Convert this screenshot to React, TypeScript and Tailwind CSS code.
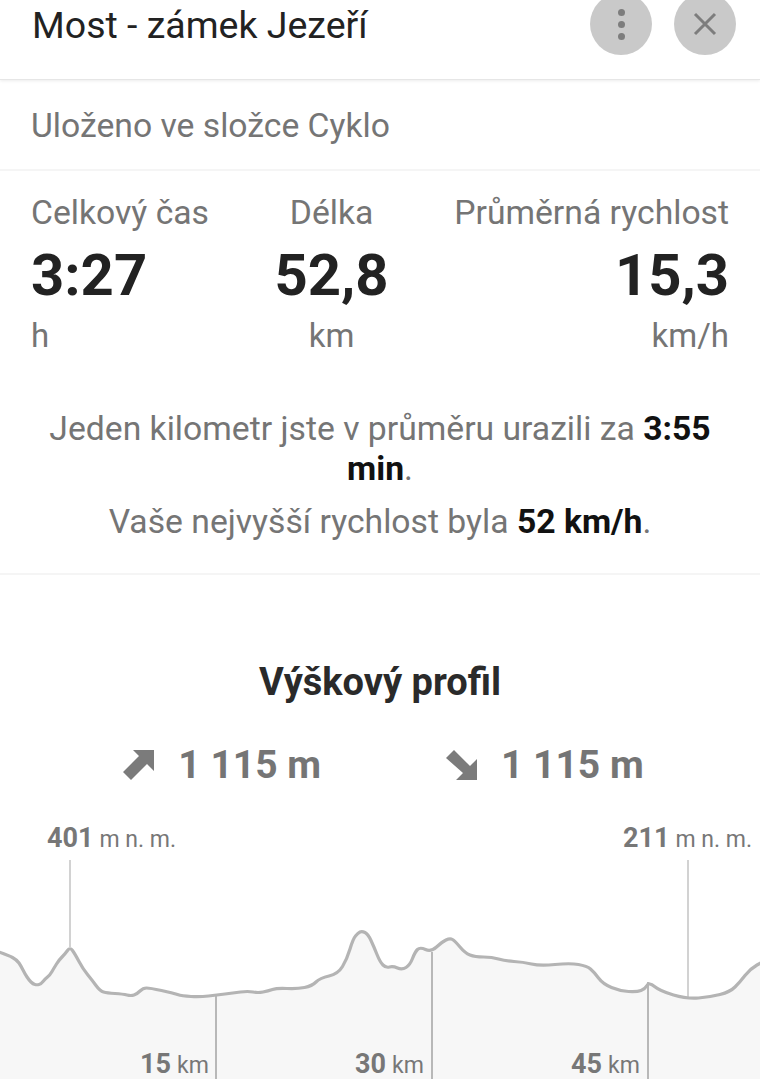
const points: [number, number][] = [
  [-4, 952], [8, 956], [17, 961], [21, 967], [25, 975], [29, 981], [33, 985], [37, 986], [41, 985], [45, 980], [50, 976], [54, 969], [59, 961], [65, 955], [70, 948],
  [75, 955], [83, 970], [92, 981], [100, 992], [107, 994], [123, 995], [131, 997], [137, 995], [143, 989], [150, 989], [173, 994], [182, 997], [200, 998], [217, 996],
  [233, 994], [248, 992], [258, 994], [268, 992], [277, 989], [297, 990], [312, 987], [320, 979], [338, 975], [347, 960], [353, 940], [358, 934], [362, 932], [368, 935],
  [374, 948], [380, 963], [386, 969], [393, 967], [402, 971], [410, 966], [415, 953], [420, 948], [431, 953], [442, 943], [450, 939], [455, 942], [465, 954], [475, 958],
  [492, 958], [505, 962], [523, 963], [540, 967], [570, 964], [587, 967], [594, 973], [603, 985], [620, 992], [637, 993], [645, 990], [649, 983], [660, 992], [687, 1000],
  [710, 998], [730, 993], [740, 983], [750, 970], [764, 962],
];

// quadratic through midpoints, keeps the line soft
function smooth(pts: [number, number][]) {
  let d = `M${pts[0][0]} ${pts[0][1]}`;
  for (let i = 1; i < pts.length - 1; i++) {
    const mx = (pts[i][0] + pts[i + 1][0]) / 2;
    const my = (pts[i][1] + pts[i + 1][1]) / 2;
    d += ` Q${pts[i][0]} ${pts[i][1]} ${mx} ${my}`;
  }
  const last = pts[pts.length - 1];
  return `${d} L${last[0]} ${last[1]}`;
}

const line = smooth(points);

function UpArrow() {
  return (
    <svg width="34" height="32" viewBox="0 0 34 32" className="text-[#7b7b7b]">
      <path d="M11 1 H32 V22 L25 15 L9 31 L1 23 L17 7 Z" fill="currentColor" />
    </svg>
  );
}

function DownArrow() {
  return (
    <svg width="34" height="32" viewBox="0 0 34 32" className="text-[#7b7b7b]">
      <path d="M9 1 L25 17 L32 10 V31 H11 L18 24 L1 9 Z" fill="currentColor" />
    </svg>
  );
}

const stats = [
  { label: "Celkový čas", value: "3:27", unit: "h", align: "text-left" },
  { label: "Délka", value: "52,8", unit: "km", align: "text-center" },
  { label: "Průměrná rychlost", value: "15,3", unit: "km/h", align: "text-right" },
];

export default function App() {
  return (
    <div className="h-[1080px] w-[760px] overflow-hidden bg-white font-['Roboto',sans-serif]">
      <header className="flex h-[80px] items-start justify-between border-b border-[#e6e6e6] pl-[32px] pr-[24px] shadow-[0_1px_3px_rgba(0,0,0,0.08)]">
        <div className="-mt-[6px] flex h-[62px] items-center text-[37.5px] text-[#222]">
          Most - zámek Jezeří
        </div>
        <div className="-mt-[7px] flex gap-[22px]">
          <div className="flex h-[62px] w-[62px] flex-col items-center justify-center gap-[5px] rounded-full bg-[#c9c9c9]">
            <span className="h-[7px] w-[7px] rounded-full bg-[#7d7d7d]" />
            <span className="h-[7px] w-[7px] rounded-full bg-[#7d7d7d]" />
            <span className="h-[7px] w-[7px] rounded-full bg-[#7d7d7d]" />
          </div>
          <div className="flex h-[62px] w-[62px] items-center justify-center rounded-full bg-[#c9c9c9]">
            <svg width="26" height="26" viewBox="0 0 26 26" className="text-[#7d7d7d]">
              <path d="M3 3 L23 23 M23 3 L3 23" stroke="currentColor" strokeWidth="3" fill="none" />
            </svg>
          </div>
        </div>
      </header>

      <div className="flex h-[91px] items-center border-b-2 border-[#f5f5f5] px-[31px] pt-[4px] text-[33.7px] text-[#757575]">
        Uloženo ve složce Cyklo
      </div>

      <section className="flex justify-between px-[31px] pt-[21px]">
        {stats.map((s) => (
          <div key={s.label} className={s.align}>
            <div className="h-[42px] text-[33.7px] leading-[42px] text-[#757575]">{s.label}</div>
            <div className="mt-[1px] h-[80px] text-[58px] leading-[80px] font-bold text-[#222]">{s.value}</div>
            <div className="h-[42px] text-[33px] leading-[42px] text-[#757575]">{s.unit}</div>
          </div>
        ))}
      </section>

      <section className="border-b-2 border-[#f5f5f5] px-[31px] pt-[52px] pb-[31px] text-center text-[33.7px] text-[#757575]">
        <p className="leading-[40px]">
          Jeden kilometr jste v průměru urazili za <b className="text-[#111]">3:55</b> <b className="text-[#111]">min</b>.
        </p>
        <p className="mt-[13px] leading-[40px]">
          Vaše nejvyšší rychlost byla <b className="text-[#111]">52 km/h</b>.
        </p>
      </section>

      <h2 className="mt-[83px] text-center text-[38px] leading-[48px] font-bold text-[#2a2a2a]">Výškový profil</h2>

      <div className="mt-[35px] flex h-[48px] items-center justify-center gap-[124px] pl-[6px] text-[39px] font-bold text-[#757575]">
        <div className="flex items-center gap-[22px]">
          <UpArrow />
          <span>1 115 m</span>
        </div>
        <div className="flex items-center gap-[22px]">
          <DownArrow />
          <span>1 115 m</span>
        </div>
      </div>

      <div className="relative mt-[30px] h-[260px]">
        <svg width="760" height="260" viewBox="0 820 760 260" className="absolute inset-0">
          <path d={`${line} L764 1084 L-4 1084 Z`} fill="#f7f7f7" />
          <path d="M70 861 V948 M688 861 V1000" stroke="#d2d2d2" strokeWidth="2" fill="none" />
          <path d="M216 996 V1080 M432 953 V1080 M648 983 V1080" stroke="#b8b8b8" strokeWidth="2" fill="none" />
          <path d={line} stroke="#b4b4b4" strokeWidth="3.2" fill="none" strokeLinejoin="round" />
        </svg>
        <Label className="left-[47px] top-[3px]" value="401" unit="m n. m." />
        <Label className="left-[623px] top-[3px]" value="211" unit="m n. m." />
        <Label className="left-[140px] top-[229px]" value="15" unit="km" />
        <Label className="left-[355px] top-[229px]" value="30" unit="km" />
        <Label className="left-[571px] top-[229px]" value="45" unit="km" />
      </div>
    </div>
  );
}

function Label({ className, value, unit }: { className: string; value: string; unit: string }) {
  return (
    <div className={`absolute whitespace-nowrap text-[#777] leading-[32px] ${className}`}>
      <span className="text-[27px] font-bold">{value}</span>
      <span className="ml-[6px] text-[23px]">{unit}</span>
    </div>
  );
}
